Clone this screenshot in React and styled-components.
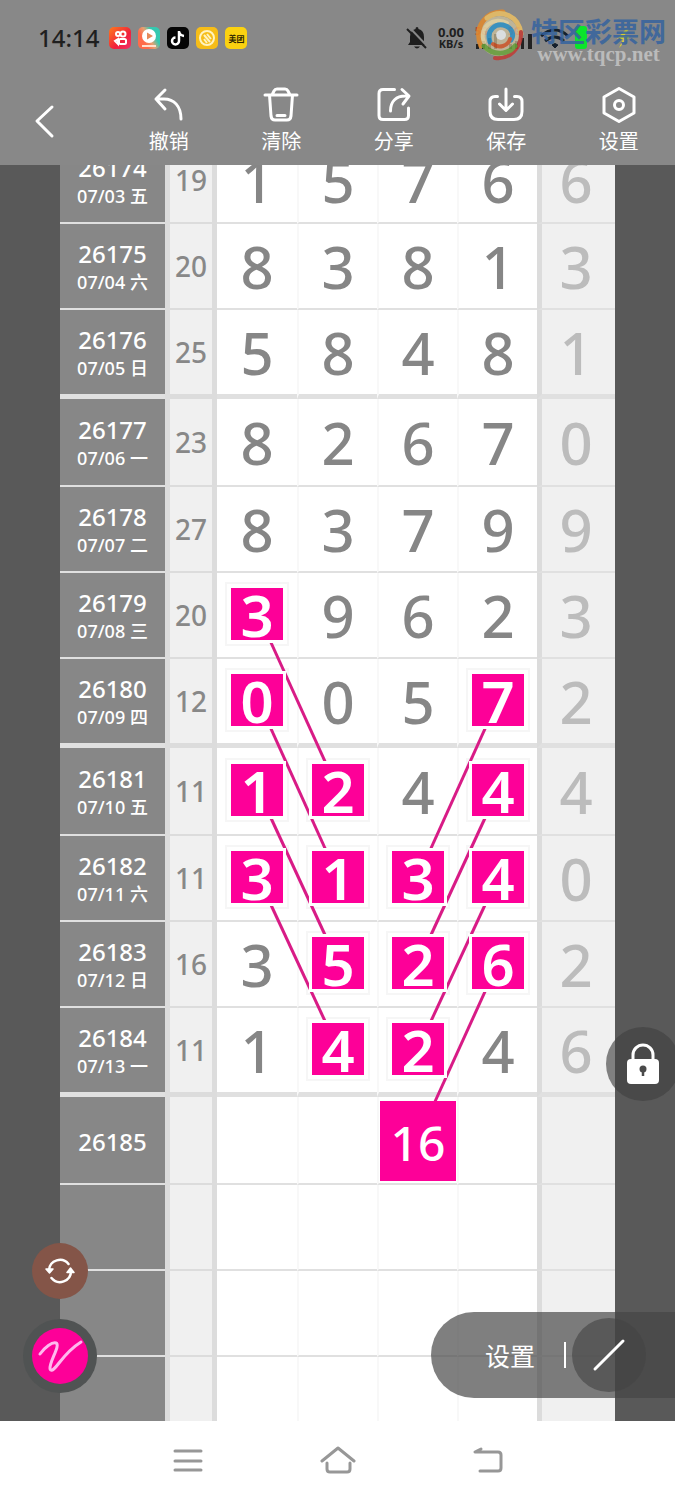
import React from 'react';
import styled, { createGlobalStyle } from 'styled-components';

const PINK = '#fd0098';
const CELL = 80;

const GlobalStyle = createGlobalStyle`
  * { box-sizing: border-box; }
  body {
    margin: 0;
    background: #fff;
    font-family: "Noto Sans", "Noto Sans CJK SC", sans-serif;
  }
  button {
    border: 0;
    padding: 0;
    background: none;
    color: inherit;
    font: inherit;
    cursor: pointer;
  }
`

const Page = styled.div`
  display: flex;
  flex-direction: column;
  height: 100vh;
  overflow: hidden;
`

const Header = styled.header`
  position: relative;
  z-index: 5;
  flex: none;
  height: 165px;
  background: #888;
  color: #fff;
`

const StatusBar = styled.div`
  display: flex;
  align-items: center;
  justify-content: space-between;
  height: 76px;
  padding: 0 38px;
  color: #1f1f1f;
`

const StatusGroup = styled.div`
  display: flex;
  align-items: center;
  gap: 7px;
`

const Clock = styled.time`
  margin-right: 3px;
  font-size: 24px;
  font-weight: 500;
  line-height: 28px;
`

const AppBadge = styled.span`
  display: flex;
  align-items: center;
  justify-content: center;
  width: 22px;
  height: 22px;
  border-radius: 5px;
  overflow: hidden;
  background: ${p => p.$bg};
  color: ${p => p.$color || '#fff'};
  font-size: 8px;
  font-weight: 700;
`

const NetSpeed = styled.span`
  display: flex;
  flex-direction: column;
  align-items: center;
  width: 30px;
  font-size: 13px;
  font-weight: 700;
  line-height: 12px;

  small {
    font-size: 11px;
  }
`

const Watermark = styled.div`
  position: absolute;
  top: 8px;
  right: 9px;
  display: flex;
  gap: 6px;
  opacity: 0.85;
`

const SiteName = styled.div`
  display: flex;
  flex-direction: column;
  align-items: center;
  padding-top: 8px;
  color: #35639f;
  font: 700 27px/30px "Noto Sans CJK SC", sans-serif;

  span {
    color: #c4c4c4;
    font: 700 21px/16px "Liberation Serif", serif;
  }
`

const Toolbar = styled.nav`
  display: grid;
  grid-template-columns: repeat(6, 1fr);
  height: 89px;
`

const ToolButton = styled.button`
  display: flex;
  flex-direction: column;
  align-items: center;
  gap: 4px;
  padding-top: 11px !important;
  font: 400 20px/28px "Noto Sans CJK SC", sans-serif !important;
`

const BackButton = styled.button`
  display: flex;
  align-items: center;
  padding-left: 32px !important;
`

const Board = styled.main`
  position: relative;
  flex: 1;
  min-height: 0;
  overflow: hidden;
  padding: 0 60px;
  background: #595959;
`

const Sheet = styled.div`
  position: relative;
  margin-top: -27px;
`

const Chart = styled.table`
  width: 100%;
  table-layout: fixed;
  border-collapse: separate;
  border-spacing: 0;
  background: #fff;
`

const Row = styled.tr`
  height: ${p => p.$height}px;

  > * {
    padding: 0;
    border: 0 solid #e0e0e0;
    border-bottom-width: ${p => (p.$thick ? 5 : 2)}px;
    text-align: center;
    vertical-align: middle;
  }
`

const Period = styled.th`
  padding-top: 4px !important;
  background: #878787;
  color: #fff;
  font-size: 24px;
  font-weight: 500;
  line-height: 28px;

  small {
    display: block;
    font-size: 18px;
    font-weight: 500;
  }
`

const Sum = styled.td`
  border-width: 0 5px !important;
  border-color: #dcdcdc !important;
  border-bottom-width: ${p => (p.$thick ? 5 : 2)}px !important;
  background: #f0f0f0;
  color: #888;
  font-size: 28px;
  font-weight: 500;
`

const Digit = styled.td`
  padding-top: 2px !important;
  border-left: ${p => (p.$first ? 0 : 2)}px solid #f8f8f8 !important;
  color: #868686;
  font-size: 58px;
  font-weight: 500;
  line-height: 60px;
`

const Extra = styled.td`
  padding: 2px 5px 0 0 !important;
  border-left: 5px solid #dcdcdc !important;
  background: #f0f0f0;
  color: #bcbcbc;
  font-size: 58px;
  font-weight: 500;
  line-height: 60px;
`

const Frame = styled.span`
  display: flex;
  align-items: center;
  justify-content: center;
  width: 64px;
  height: 64px;
  margin: -4px auto 0;
  border: 2px solid #f6f6f6;
`

const Mark = styled.span`
  position: relative;
  z-index: 2;
  width: 52px;
  height: 52px;
  background: ${PINK};
  box-shadow: 0 0 0 3px #fff;
  color: #fff;
  font-weight: 600;
  line-height: 54px;
`

const Guess = styled.span`
  position: relative;
  z-index: 2;
  display: block;
  width: 76px;
  height: 80px;
  margin: 0 auto;
  background: ${PINK};
  color: #fff;
  font-size: 48px;
  font-weight: 500;
  line-height: 84px;
`

const Trails = styled.svg`
  position: absolute;
  z-index: 1;
  top: 0;
  left: 157px;
  width: calc(100% - 235px);
  height: 100%;
  pointer-events: none;
`

const RoundButton = styled.button`
  position: absolute;
  z-index: 4;
  display: flex;
  align-items: center;
  justify-content: center;
  width: ${p => p.$size}px;
  height: ${p => p.$size}px;
  border-radius: 50%;
  background: ${p => p.$bg};
`

const LockButton = styled(RoundButton)`
  right: -5px;
  bottom: 320px;
`

const SwapButton = styled(RoundButton)`
  left: 32px;
  bottom: 122px;
`

const PenButton = styled(RoundButton)`
  left: 23px;
  bottom: 28px;
`

const PenDot = styled.span`
  display: flex;
  width: 56px;
  height: 56px;
  border-radius: 50%;
  background: ${PINK};
`

const DrawPanel = styled.div`
  position: absolute;
  z-index: 4;
  right: 0;
  bottom: 23px;
  display: flex;
  align-items: center;
  width: 244px;
  height: 86px;
  padding-left: 54px;
  border-radius: 43px 0 0 43px;
  background: rgba(70, 70, 70, 0.69);
  color: #fff;
`

const PanelLabel = styled.button`
  padding-right: 29px !important;
  font: 400 25px/36px "Noto Sans CJK SC", sans-serif !important;
`

const Divider = styled.span`
  width: 2px;
  height: 26px;
  margin-right: 6px;
  background: #fff;
`

const LineTool = styled.button`
  display: flex;
  align-items: center;
  justify-content: center;
  width: 74px;
  height: 74px;
  border-radius: 50%;
  background: rgba(68, 68, 68, 0.62) !important;
`

const SystemNav = styled.nav`
  display: grid;
  grid-template-columns: repeat(3, 150px);
  justify-content: center;
  flex: none;
  height: 79px;
  background: #fff;
  color: #979797;
`

const SystemButton = styled.button`
  display: flex;
  align-items: center;
  justify-content: center;
`

const Stroke = ({ size = 36, width = 3, children }) => (
  <svg width={size} height={size} viewBox={`0 0 ${size} ${size}`} fill="none"
    stroke="currentColor" strokeWidth={width} strokeLinecap="round" strokeLinejoin="round">
    {children}
  </svg>
);

const TOOLS = [
  { label: '撤销', icon: <path d="M14 3L5 12l9 10M5 12h8c10 0 17 7 17 20" /> },
  { label: '清除', icon: <path d="M2 8h32M9 8l2-4q1-2 3-2h8q2 0 3 2l2 4M6.500 8l1.500 21q.5 4 4 4h12q3.500 0 4-4l1.500-21M14 28.500h8" /> },
  { label: '分享', icon: <path d="M18.500 2.500H7q-4 0-4 4v22q0 4 4 4h21.500q4 0 4-4V21M14.500 24c0-10 6-15 15-15h3M26 2.500l7 6.500-6 8" /> },
  { label: '保存', icon: <path d="M9.500 9.500H7q-5 0-5 5v10q0 8 8 8h16q8 0 8-8v-10q0-5-5-5h-2.500M18 2v21M11.500 17l6.500 6.500 6.500-6.500" /> },
  { label: '设置', icon: <><path d="M18 1.500L33 10v16L18 34.500 3 26V10z" /><circle cx="18" cy="18" r="4.500" /></> },
];

// marks holds the indexes of the highlighted digits
const ROWS = [
  { id: '26174', date: '07/03 五', sum: 19, digits: '1576', extra: 6, height: 86 },
  { id: '26175', date: '07/04 六', sum: 20, digits: '8381', extra: 3, height: 86 },
  { id: '26176', date: '07/05 日', sum: 25, digits: '5848', extra: 1, height: 89, thick: true },
  { id: '26177', date: '07/06 一', sum: 23, digits: '8267', extra: 0, height: 88 },
  { id: '26178', date: '07/07 二', sum: 27, digits: '8379', extra: 9, height: 86 },
  { id: '26179', date: '07/08 三', sum: 20, digits: '3962', extra: 3, height: 86, marks: [0] },
  { id: '26180', date: '07/09 四', sum: 12, digits: '0057', extra: 2, height: 89, thick: true, marks: [0, 3] },
  { id: '26181', date: '07/10 五', sum: 11, digits: '1244', extra: 4, height: 88, marks: [0, 1, 3] },
  { id: '26182', date: '07/11 六', sum: 11, digits: '3134', extra: 0, height: 86, marks: [0, 1, 2, 3] },
  { id: '26183', date: '07/12 日', sum: 16, digits: '3526', extra: 2, height: 86, marks: [1, 2, 3] },
  { id: '26184', date: '07/13 一', sum: 11, digits: '1424', extra: 6, height: 89, thick: true, marks: [1, 2] },
  { id: '26185', digits: '    ', height: 88, guess: { col: 2, value: 16 } },
  { id: '', digits: '    ', height: 86 },
  { id: '', digits: '    ', height: 86 },
  { id: '', digits: '    ', height: 86 },
];

// [from row, from col, to row, to col]
const LINKS = [
  [5, 0, 7, 1],
  [6, 0, 8, 1],
  [7, 0, 9, 1],
  [8, 0, 10, 1],
  [6, 3, 8, 2],
  [7, 3, 9, 2],
  [8, 3, 10, 2],
  [9, 3, 11, 2],
];

const totalHeight = ROWS.reduce((sum, r) => sum + r.height, 0);

const centerOf = (row, col) => {
  const top = ROWS.slice(0, row).reduce((sum, r) => sum + r.height, 0);
  const inner = ROWS[row].height - (ROWS[row].thick ? 5 : 2);
  return [col * CELL + CELL / 2 + 1, top + inner / 2 - 1];
};

const ChartCell = ({ row, col }) => {
  const value = row.digits[col].trim();
  if (row.guess && row.guess.col === col) return <Guess>{row.guess.value}</Guess>;
  if (row.marks && row.marks.includes(col)) return <Frame><Mark>{value}</Mark></Frame>;
  return value;
};

const TrendChart = () => {
  const rowEls = ROWS.map((row, i) => (
    <Row key={i} $height={row.height} $thick={row.thick}>
      <Period scope="row">
        {row.id}
        {row.date && <small>{row.date}</small>}
      </Period>
      <Sum $thick={row.thick}>{row.sum}</Sum>
      {[0, 1, 2, 3].map(col => (
        <Digit key={col} $first={col === 0}>
          <ChartCell row={row} col={col} />
        </Digit>
      ))}
      <Extra>{row.extra}</Extra>
    </Row>
  ));

  return (
    <Sheet>
      <Chart>
        <colgroup>
          <col width="105" />
          <col width="52" />
          <col span="4" />
          <col width="78" />
        </colgroup>
        <tbody>{rowEls}</tbody>
      </Chart>
      <Trails viewBox={`0 0 ${CELL * 4} ${totalHeight}`} preserveAspectRatio="none">
        {LINKS.map(([r1, c1, r2, c2]) => {
          const [x1, y1] = centerOf(r1, c1);
          const [x2, y2] = centerOf(r2, c2);
          return (
            <line key={`${r1}${c1}`} x1={x1} y1={y1} x2={x2} y2={y2}
              stroke="#d81b86" strokeWidth="3" vectorEffect="non-scaling-stroke" />
          );
        })}
      </Trails>
    </Sheet>
  );
};

const AppBadges = () => (
  <>
    <AppBadge $bg="linear-gradient(135deg, #ff7a1c, #f0203c 60%, #f0306c)">
      <svg width="22" height="22" fill="none" stroke="#fff" strokeWidth="2">
        <circle cx="9" cy="7" r="2" />
        <circle cx="14" cy="7" r="2.500" />
        <rect x="10" y="12" width="7" height="5" rx="1.500" />
        <path d="M9 12l-3 2 3 3z" />
      </svg>
    </AppBadge>
    <AppBadge $bg="linear-gradient(60deg, #ff6b4a 30%, #e8a070 50%, #35c8b0 70%)">
      <svg width="22" height="22">
        <circle cx="11" cy="9" r="7" fill="#fff" />
        <path d="M9 5.500l6 3.500-6 3.500z" fill="#e58a5a" />
        <path d="M4 19h14" stroke="#ffe0d0" strokeWidth="2" />
      </svg>
    </AppBadge>
    <AppBadge $bg="#050505">
      <svg width="22" height="22" fill="none" strokeWidth="2.500">
        <path d="M12 4v10a3.500 3.500 0 1 1-3.500-3.500M12 5q1 3.500 5 4" stroke="#fff" />
      </svg>
    </AppBadge>
    <AppBadge $bg="#f6bd18">
      <svg width="22" height="22" fill="none" stroke="#fff3c0" strokeWidth="2">
        <circle cx="11" cy="11" r="7" />
        <path d="M8 8l6 7M11 7l4 5M8 12l3 4" />
      </svg>
    </AppBadge>
    <AppBadge $bg="#fbd210" $color="#2b2400">美团</AppBadge>
  </>
);

const StatusIcons = () => (
  <svg width="164" height="28" viewBox="-2 0 164 28">
    <g fill="#222">
      <path d="M1 20h3v5H1zM7 17h3v8H7zM13 14h3v11h-3zM19 10h3v15h-3zM34 20h3v5h-3zM40 17h3v8h-3zM46 14h3v11h-3zM53 10h4v15h-4z" />
    </g>
    <g fill="#b34a3c" fontSize="10" fontWeight="700">
      <text x="0" y="11">5G</text>
      <text x="33" y="11">5G</text>
    </g>
    <g fill="none" stroke="#15202c" strokeWidth="3">
      <path d="M66 12q14-12 27 0M70 17q10-8 19 0" />
      <path d="M77 21l3 3 3-3q-3-3-6 0z" fill="#15202c" strokeWidth="1" />
    </g>
    <rect x="100" y="2" width="12" height="23" rx="3" fill="#0be52c" />
    <path d="M151 5l-9 10h6l-4 9 11-12h-6l5-7z" fill="#d8d32a" />
  </svg>
);

const SwirlLogo = () => (
  <svg width="52" height="56" viewBox="0 0 52 56" fill="none" strokeLinecap="round">
    <circle cx="26" cy="28" r="20" fill="#d8c9a0" opacity="0.8" />
    <path d="M8 38C0 18 14 3 30 4" stroke="#e38a2c" strokeWidth="5" />
    <path d="M14 10C28 0 46 8 48 26" stroke="#ecc063" strokeWidth="5" />
    <path d="M48 24c1 16-12 28-26 26" stroke="#c23b34" strokeWidth="4" />
    <path d="M42 38c-7 9-22 10-31 0" stroke="#6ca53c" strokeWidth="5" />
    <path d="M11 34C5 18 22 8 34 15" stroke="#e9d9a4" strokeWidth="4" />
    <path d="M17 34c-4-12 6-20 16-16 7 3 8 10 5 14" stroke="#2c93c8" strokeWidth="5" />
    <path d="M20 36c6 5 15 2 17-5" stroke="#d45a2c" strokeWidth="4" />
    <circle cx="28" cy="27" r="5" fill="#e9edf0" />
  </svg>
);

const App = () => (
  <Page>
    <GlobalStyle />
    <Header>
      <StatusBar>
        <StatusGroup>
          <Clock>14:14</Clock>
          <AppBadges />
        </StatusGroup>
        <StatusGroup>
          <svg width="24" height="24" viewBox="0 0 24 24">
            <path d="M12 1q1.500 0 1.500 2 5.500 1.500 5.500 8v5l2 3H3l2-3v-5q0-6.500 5.500-8Q10.500 1 12 1zM9 20.500h6q-3 4-6 0z" fill="#1f1f1f" />
            <path d="M4 1l19 20" stroke="#888" strokeWidth="2" />
            <path d="M2 3l19 19" stroke="#1f1f1f" strokeWidth="2" />
          </svg>
          <NetSpeed>0.00<small>KB/s</small></NetSpeed>
          <StatusIcons />
        </StatusGroup>
      </StatusBar>
      <Watermark>
        <SwirlLogo />
        <SiteName>特区彩票网<span>www.tqcp.net</span></SiteName>
      </Watermark>
      <Toolbar>
        <BackButton aria-label="返回">
          <Stroke width={3}><path d="M20 4L5 18l15 15" /></Stroke>
        </BackButton>
        {TOOLS.map(tool => (
          <ToolButton key={tool.label}>
            <Stroke>{tool.icon}</Stroke>
            {tool.label}
          </ToolButton>
        ))}
      </Toolbar>
    </Header>

    <Board>
      <TrendChart />
      <LockButton $size={74} $bg="rgba(64, 64, 64, 0.64)" aria-label="锁定">
        <svg width="34" height="42" viewBox="0 0 34 42">
          <path d="M7 17v-5a10 10 0 0 1 20 0v5" fill="none" stroke="#fff" strokeWidth="3" />
          <rect x="1" y="16" width="32" height="25" rx="4" fill="#fff" />
          <circle cx="17" cy="26" r="3.500" fill="#4a4a4a" />
          <path d="M17 27v6" stroke="#4a4a4a" strokeWidth="2.500" />
        </svg>
      </LockButton>
      <SwapButton $size={56} $bg="#845548" aria-label="切换">
        <svg width="32" height="28" viewBox="0 0 32 28" fill="none" stroke="#fff" strokeWidth="2.500" strokeLinecap="round">
          <path d="M5 13A11 11 0 0 1 24.500 7M27 14A11 11 0 0 1 7.500 21" />
          <path d="M2 12h7l-3.500 4zM23 15.500h7L26.500 11z" fill="#fff" strokeWidth="1.500" strokeLinejoin="round" />
        </svg>
      </SwapButton>
      <PenButton $size={74} $bg="#505353" aria-label="画笔">
        <PenDot>
          <svg width="56" height="56" viewBox="0 0 56 56" fill="none" stroke="#ffb8ee" strokeWidth="3" strokeLinecap="round" strokeLinejoin="round">
            <path d="M8 26C13 19 20 14 24 15c5 2-7 19-6 26 1 4 6-2 9-6C34 26 41 19 49 14" />
          </svg>
        </PenDot>
      </PenButton>
      <DrawPanel>
        <PanelLabel>设置</PanelLabel>
        <Divider />
        <LineTool aria-label="直线">
          <Stroke size={34} width={3}><path d="M3 31L31 3" /></Stroke>
        </LineTool>
      </DrawPanel>
    </Board>

    <SystemNav>
      <SystemButton aria-label="菜单">
        <Stroke size={30} width={3}><path d="M2 5h26M2 15h26M2 24h26" /></Stroke>
      </SystemButton>
      <SystemButton aria-label="主页">
        <Stroke size={36} width={3}><path d="M2 18L18 5l16 13M7 20v6q0 3 3 3h17q3 0 3-3v-6" /></Stroke>
      </SystemButton>
      <SystemButton aria-label="后退">
        <Stroke size={32} width={3}><path d="M9 4L3 7h23q3 0 3 3v13q0 3-3 3H8" /></Stroke>
      </SystemButton>
    </SystemNav>
  </Page>
);

export default App;
